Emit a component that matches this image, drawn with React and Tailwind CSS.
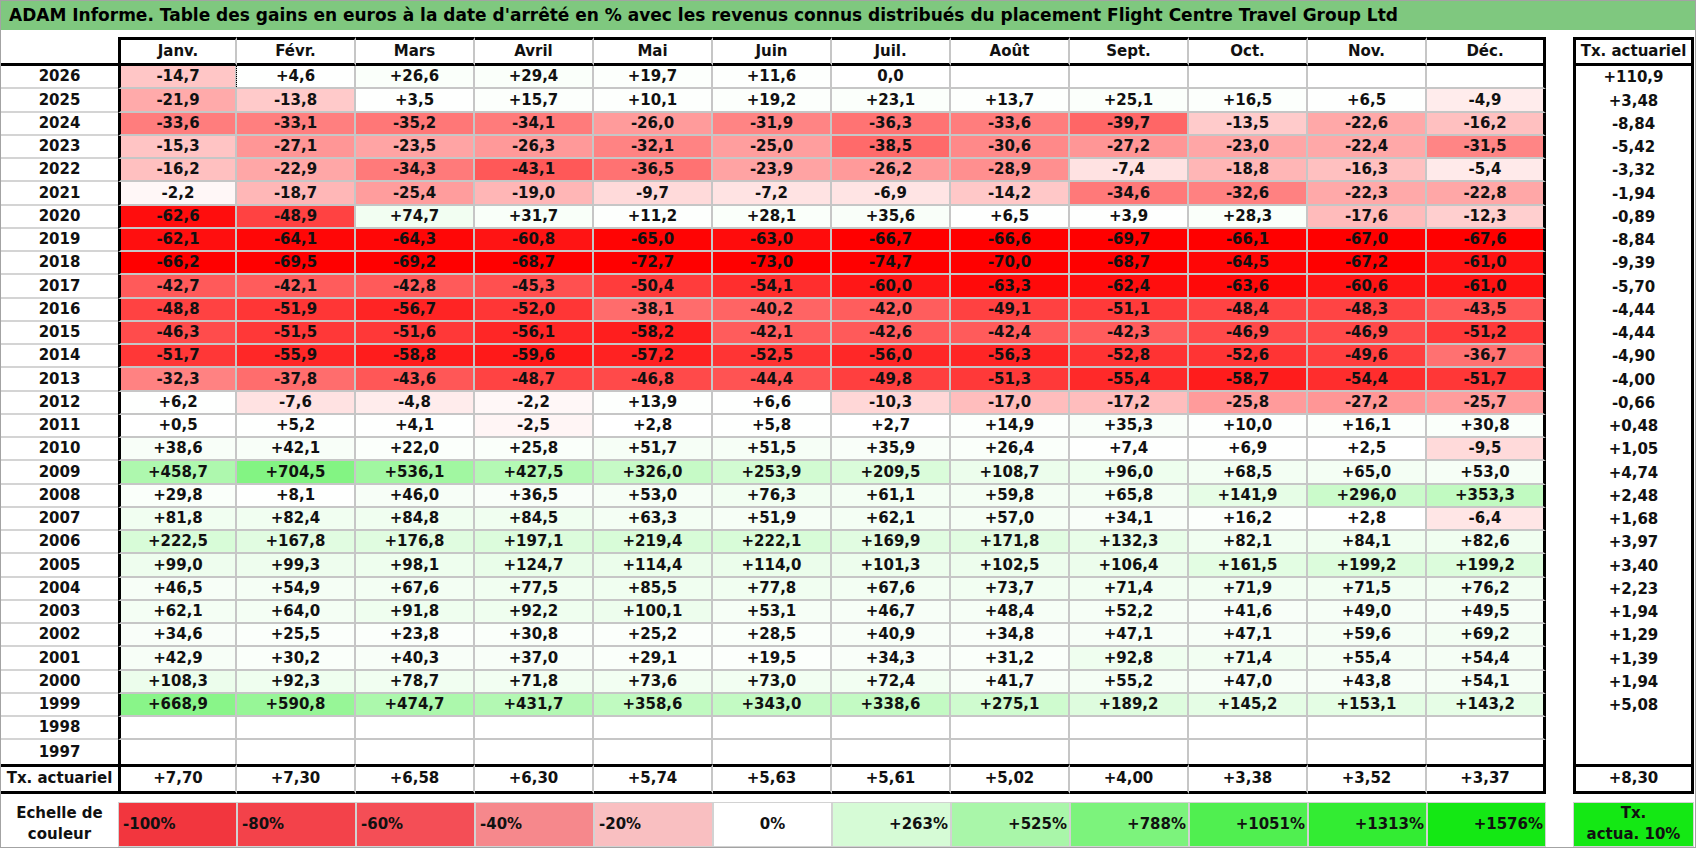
import React from 'react';

const MONTHS = ['Janv.', 'Févr.', 'Mars', 'Avril', 'Mai', 'Juin', 'Juil.', 'Août', 'Sept.', 'Oct.', 'Nov.', 'Déc.'];

// year, monthly gains, tx. actuariel
const ROWS = [
    ['2026', '-14,7 +4,6 +26,6 +29,4 +19,7 +11,6 0,0', '+110,9'],
    ['2025', '-21,9 -13,8 +3,5 +15,7 +10,1 +19,2 +23,1 +13,7 +25,1 +16,5 +6,5 -4,9', '+3,48'],
    ['2024', '-33,6 -33,1 -35,2 -34,1 -26,0 -31,9 -36,3 -33,6 -39,7 -13,5 -22,6 -16,2', '-8,84'],
    ['2023', '-15,3 -27,1 -23,5 -26,3 -32,1 -25,0 -38,5 -30,6 -27,2 -23,0 -22,4 -31,5', '-5,42'],
    ['2022', '-16,2 -22,9 -34,3 -43,1 -36,5 -23,9 -26,2 -28,9 -7,4 -18,8 -16,3 -5,4', '-3,32'],
    ['2021', '-2,2 -18,7 -25,4 -19,0 -9,7 -7,2 -6,9 -14,2 -34,6 -32,6 -22,3 -22,8', '-1,94'],
    ['2020', '-62,6 -48,9 +74,7 +31,7 +11,2 +28,1 +35,6 +6,5 +3,9 +28,3 -17,6 -12,3', '-0,89'],
    ['2019', '-62,1 -64,1 -64,3 -60,8 -65,0 -63,0 -66,7 -66,6 -69,7 -66,1 -67,0 -67,6', '-8,84'],
    ['2018', '-66,2 -69,5 -69,2 -68,7 -72,7 -73,0 -74,7 -70,0 -68,7 -64,5 -67,2 -61,0', '-9,39'],
    ['2017', '-42,7 -42,1 -42,8 -45,3 -50,4 -54,1 -60,0 -63,3 -62,4 -63,6 -60,6 -61,0', '-5,70'],
    ['2016', '-48,8 -51,9 -56,7 -52,0 -38,1 -40,2 -42,0 -49,1 -51,1 -48,4 -48,3 -43,5', '-4,44'],
    ['2015', '-46,3 -51,5 -51,6 -56,1 -58,2 -42,1 -42,6 -42,4 -42,3 -46,9 -46,9 -51,2', '-4,44'],
    ['2014', '-51,7 -55,9 -58,8 -59,6 -57,2 -52,5 -56,0 -56,3 -52,8 -52,6 -49,6 -36,7', '-4,90'],
    ['2013', '-32,3 -37,8 -43,6 -48,7 -46,8 -44,4 -49,8 -51,3 -55,4 -58,7 -54,4 -51,7', '-4,00'],
    ['2012', '+6,2 -7,6 -4,8 -2,2 +13,9 +6,6 -10,3 -17,0 -17,2 -25,8 -27,2 -25,7', '-0,66'],
    ['2011', '+0,5 +5,2 +4,1 -2,5 +2,8 +5,8 +2,7 +14,9 +35,3 +10,0 +16,1 +30,8', '+0,48'],
    ['2010', '+38,6 +42,1 +22,0 +25,8 +51,7 +51,5 +35,9 +26,4 +7,4 +6,9 +2,5 -9,5', '+1,05'],
    ['2009', '+458,7 +704,5 +536,1 +427,5 +326,0 +253,9 +209,5 +108,7 +96,0 +68,5 +65,0 +53,0', '+4,74'],
    ['2008', '+29,8 +8,1 +46,0 +36,5 +53,0 +76,3 +61,1 +59,8 +65,8 +141,9 +296,0 +353,3', '+2,48'],
    ['2007', '+81,8 +82,4 +84,8 +84,5 +63,3 +51,9 +62,1 +57,0 +34,1 +16,2 +2,8 -6,4', '+1,68'],
    ['2006', '+222,5 +167,8 +176,8 +197,1 +219,4 +222,1 +169,9 +171,8 +132,3 +82,1 +84,1 +82,6', '+3,97'],
    ['2005', '+99,0 +99,3 +98,1 +124,7 +114,4 +114,0 +101,3 +102,5 +106,4 +161,5 +199,2 +199,2', '+3,40'],
    ['2004', '+46,5 +54,9 +67,6 +77,5 +85,5 +77,8 +67,6 +73,7 +71,4 +71,9 +71,5 +76,2', '+2,23'],
    ['2003', '+62,1 +64,0 +91,8 +92,2 +100,1 +53,1 +46,7 +48,4 +52,2 +41,6 +49,0 +49,5', '+1,94'],
    ['2002', '+34,6 +25,5 +23,8 +30,8 +25,2 +28,5 +40,9 +34,8 +47,1 +47,1 +59,6 +69,2', '+1,29'],
    ['2001', '+42,9 +30,2 +40,3 +37,0 +29,1 +19,5 +34,3 +31,2 +92,8 +71,4 +55,4 +54,4', '+1,39'],
    ['2000', '+108,3 +92,3 +78,7 +71,8 +73,6 +73,0 +72,4 +41,7 +55,2 +47,0 +43,8 +54,1', '+1,94'],
    ['1999', '+668,9 +590,8 +474,7 +431,7 +358,6 +343,0 +338,6 +275,1 +189,2 +145,2 +153,1 +143,2', '+5,08'],
    ['1998', '', ''],
    ['1997', '', ''],
];

const TX_ROW = ['+7,70', '+7,30', '+6,58', '+6,30', '+5,74', '+5,63', '+5,61', '+5,02', '+4,00', '+3,38', '+3,52', '+3,37'];

const LEGEND = [
    { label: '-100%', bg: 'bg-[#f2363e]', align: 'justify-start pl-1' },
    { label: '-80%', bg: 'bg-[#f3424a]', align: 'justify-start pl-1' },
    { label: '-60%', bg: 'bg-[#f44e56]', align: 'justify-start pl-1' },
    { label: '-40%', bg: 'bg-[#f6888c]', align: 'justify-start pl-1' },
    { label: '-20%', bg: 'bg-[#f9bfc1]', align: 'justify-start pl-1' },
    { label: '0%', bg: 'bg-white', align: 'justify-center' },
    { label: '+263%', bg: 'bg-[#d6fbd6]', align: 'justify-end pr-0.5' },
    { label: '+525%', bg: 'bg-[#a9f6a9]', align: 'justify-end pr-0.5' },
    { label: '+788%', bg: 'bg-[#7cf37c]', align: 'justify-end pr-0.5' },
    { label: '+1051%', bg: 'bg-[#50ef50]', align: 'justify-end pr-0.5' },
    { label: '+1313%', bg: 'bg-[#33ec33]', align: 'justify-end pr-0.5' },
    { label: '+1576%', bg: 'bg-[#14e814]', align: 'justify-end pr-0.5' },
];

// conditional format: white at 0, red for losses, green for gains
const cellColor = (s) => {
    if (!s) return '#ffffff';
    const v = parseFloat(s.replace(',', '.'));
    if (v < 0) {
        const t = Math.min(1, -v / 66);
        const g = Math.round(255 * (1 - t));
        return `rgb(255,${g},${g})`;
    }
    const t = Math.min(1, v / 1450);
    const c = Math.round(255 * (1 - t));
    const g = Math.round(255 - 22 * t);
    return `rgb(${c},${g},${c})`;
};

const monthEdge = (i) => {
    if (i === 0) return 'border-l-[3px] border-l-black border-r-2 border-r-[#c6c6c6]';
    if (i === 11) return 'border-r-[3px] border-r-black';
    return 'border-r-2 border-r-[#c6c6c6]';
};

const HeaderRow = () => (
    <div className="flex h-[29px]">
        <div className="w-[117px] border-b-[3px] border-b-black" />
        {MONTHS.map((m, i) => (
            <div key={m} className={`w-[119px] flex items-center justify-center border-y-[3px] border-y-black ${monthEdge(i)}`}>
                {m}
            </div>
        ))}
        <div className="w-[27px]" />
        <div className="w-[121px] flex items-center justify-center border-[3px] border-black">Tx. actuariel</div>
    </div>
);

const DataRow = ({ year, values, tx, last }) => {
    const cells = values ? values.split(' ') : [];
    return (
        <div className="flex h-[23.25px]">
            <div className={`w-[117px] flex items-center justify-center ${last ? '' : 'border-b-2 border-b-[#d4d4d4]'}`}>{year}</div>
            {MONTHS.map((m, i) => (
                <div
                    key={m}
                    className={`relative w-[119px] flex items-center justify-center ${last ? '' : 'border-b-2 border-b-[#c6c6c6]'} ${monthEdge(i)}`}
                    style={{ backgroundColor: cellColor(cells[i]) }}
                >
                    {cells[i] || ''}
                    {year === '2026' && i === 0 && (
                        <span className="absolute -right-[2px] top-0 bottom-0 border-l border-dotted border-black" />
                    )}
                </div>
            ))}
            <div className="w-[27px]" />
            <div className="w-[121px] flex items-center justify-center border-x-[3px] border-x-black">{tx}</div>
        </div>
    );
};

const TxRow = () => (
    <div className="flex h-[30px]">
        <div className="w-[117px] flex items-center justify-center border-y-[3px] border-y-black">Tx. actuariel</div>
        {TX_ROW.map((v, i) => (
            <div key={i} className={`w-[119px] flex items-center justify-center border-y-[3px] border-y-black ${monthEdge(i)}`}>
                {v}
            </div>
        ))}
        <div className="w-[27px]" />
        <div className="w-[121px] flex items-center justify-center border-[3px] border-black">+8,30</div>
    </div>
);

const LegendRow = () => (
    <div className="flex h-[45px] mt-2">
        <div className="w-[117px] flex flex-col items-center justify-center leading-[21px]">
            <span>Echelle de</span>
            <span>couleur</span>
        </div>
        {LEGEND.map((l) => (
            <div key={l.label} className={`w-[119px] flex items-center border border-[#d2d2d2] ${l.bg} ${l.align}`}>
                {l.label}
            </div>
        ))}
        <div className="w-[27px]" />
        <div className="w-[121px] flex flex-col items-center justify-center leading-[21px] bg-[#14e814] border border-[#d2d2d2]">
            <span>Tx.</span>
            <span>actua. 10%</span>
        </div>
    </div>
);

export default function App() {
    return (
        <div className="w-[1696px] h-[848px] bg-white border border-[#a3a3a3] overflow-hidden font-['DejaVu_Sans',sans-serif] font-bold text-[15px] text-[#111]">
            <div className="h-[29px] bg-[#7fc87f] flex items-center pl-2 text-[17px] text-black">
                ADAM Informe. Table des gains en euros à la date d'arrêté en % avec les revenus connus distribués du placement Flight Centre Travel Group Ltd
            </div>
            <div className="h-[7px]" />
            <HeaderRow />
            {ROWS.map(([year, values, tx], idx) => (
                <DataRow key={year} year={year} values={values} tx={tx} last={idx === ROWS.length - 1} />
            ))}
            <TxRow />
            <LegendRow />
        </div>
    );
}
